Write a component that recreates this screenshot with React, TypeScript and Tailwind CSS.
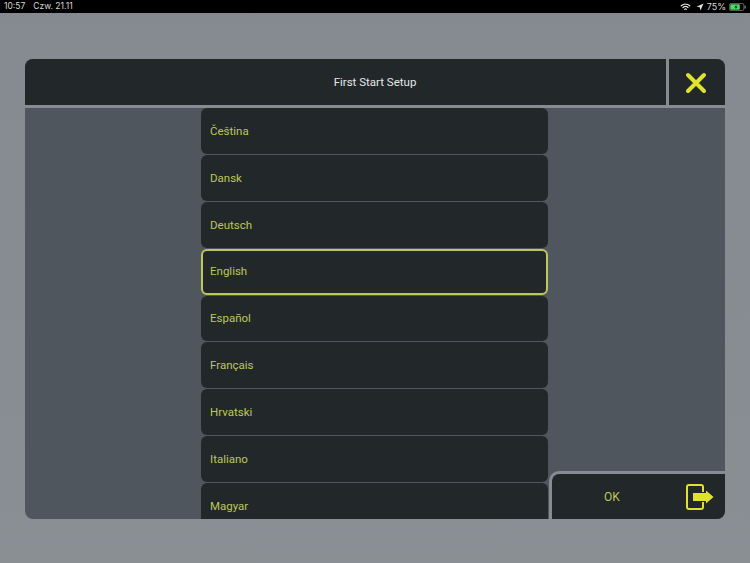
const languages = ['Čeština', 'Dansk', 'Deutsch', 'English', 'Español', 'Français', 'Hrvatski', 'Italiano', 'Magyar']

function StatusBar() {
  return (
    <div className="flex h-[13px] items-center justify-between bg-black px-[4px] font-['Inter',sans-serif] text-[8.500px] leading-none text-[#d8d8d8]">
      <div className="flex gap-[8px]">
        <span>10:57</span>
        <span>Czw. 21.11</span>
      </div>
      <div className="flex items-center gap-[3px]">
        <svg width="11" height="8" viewBox="0 0 20 16" fill="none" stroke="#e4e4e4" strokeWidth="2.400" strokeLinecap="round">
          <path d="M1.500 5.500C6.500 1 13.500 1 18.500 5.500" />
          <path d="M5 9c3-2.600 7-2.600 10 0" />
          <path d="M8.500 12.500c1-.9 2-.9 3 0" />
        </svg>
        <svg width="8" height="8" viewBox="0 0 16 16" className="ml-[2px]">
          <path d="M15 1 1 7.500l6.500 1L9 15z" fill="#e4e4e4" />
        </svg>
        <span className="text-[9px]">75%</span>
        <svg width="17" height="8" viewBox="0 0 34 16">
          <rect x="0.750" y="0.750" width="29" height="14.500" rx="3.500" fill="none" stroke="#7d8a7d" strokeWidth="1.500" />
          <rect x="2.500" y="2.500" width="19" height="11" rx="1.500" fill="#4fd964" />
          <rect x="31" y="5" width="2.500" height="6" rx="1" fill="#7d8a7d" />
          <path d="M15 3l-4 6h3l-1 4 4-6h-3z" fill="#0a0a0a" />
        </svg>
      </div>
    </div>
  )
}

export default function App() {
  return (
    <div className="flex h-[563px] w-[750px] flex-col overflow-hidden bg-gradient-to-b from-[#858a90] to-[#8a8f94] font-['Roboto','Liberation_Sans',sans-serif]">
      <StatusBar />
      <div className="px-[25px] pt-[46px]">
        <section className="relative h-[460px] overflow-hidden rounded-[8px] bg-[#4f565e]">
          <header className="flex h-[49px] border-b-[3px] border-[#878c92]">
            <h1 className="flex flex-1 items-center justify-center bg-[#22272a] pl-[59px] pt-[1px] text-[11.500px] font-normal text-[#e6e8e8]">First Start Setup</h1>
            <button className="flex w-[59px] items-center justify-center border-l-[3px] border-[#878c92] bg-[#22272a] pr-[2px] pt-[1px]">
              <svg width="22" height="22" viewBox="0 0 22 22" stroke="#dfe32f" strokeWidth="4" strokeLinecap="round" strokeLinejoin="round">
                <path d="M3 3 19 19M19 3 3 19" />
              </svg>
            </button>
          </header>
          <div className="ml-[176px] flex w-[347px] flex-col gap-[1px]">
            {languages.map((name) => (
              <div
                key={name}
                className={
                  name === 'English'
                    ? 'flex h-[45.875px] shrink-0 items-center rounded-[6px] border-2 border-[#bcc85a] bg-[#22272a] pl-[7px] pt-[1px] text-[11.500px] text-[#bcc85a]'
                    : 'flex h-[45.875px] shrink-0 items-center rounded-[6px] bg-[#22272a] pl-[9px] pt-[1px] text-[11.500px] text-[#bcc85a]'
                }
              >
                {name}
              </div>
            ))}
          </div>
          <button className="absolute bottom-0 right-0 flex h-[48px] w-[176px] items-center rounded-tl-[10px] border-l-[3px] border-t-[3px] border-[#878c92] bg-[#22272a]">
            <span className="ml-[52px] text-[12px] text-[#bcc85a]">OK</span>
            <svg width="28" height="26" viewBox="0 0 28 26" className="ml-auto mr-[11px]" fill="none">
              <path d="M17 8V3a2 2 0 0 0-2-2H3a2 2 0 0 0-2 2v20a2 2 0 0 0 2 2h12a2 2 0 0 0 2-2v-5" stroke="#dfe32f" strokeWidth="2" />
              <path d="M7 9h13V6.500L27.500 13 20 19.500V17H7z" fill="#dfe32f" />
            </svg>
          </button>
        </section>
      </div>
    </div>
  )
}
